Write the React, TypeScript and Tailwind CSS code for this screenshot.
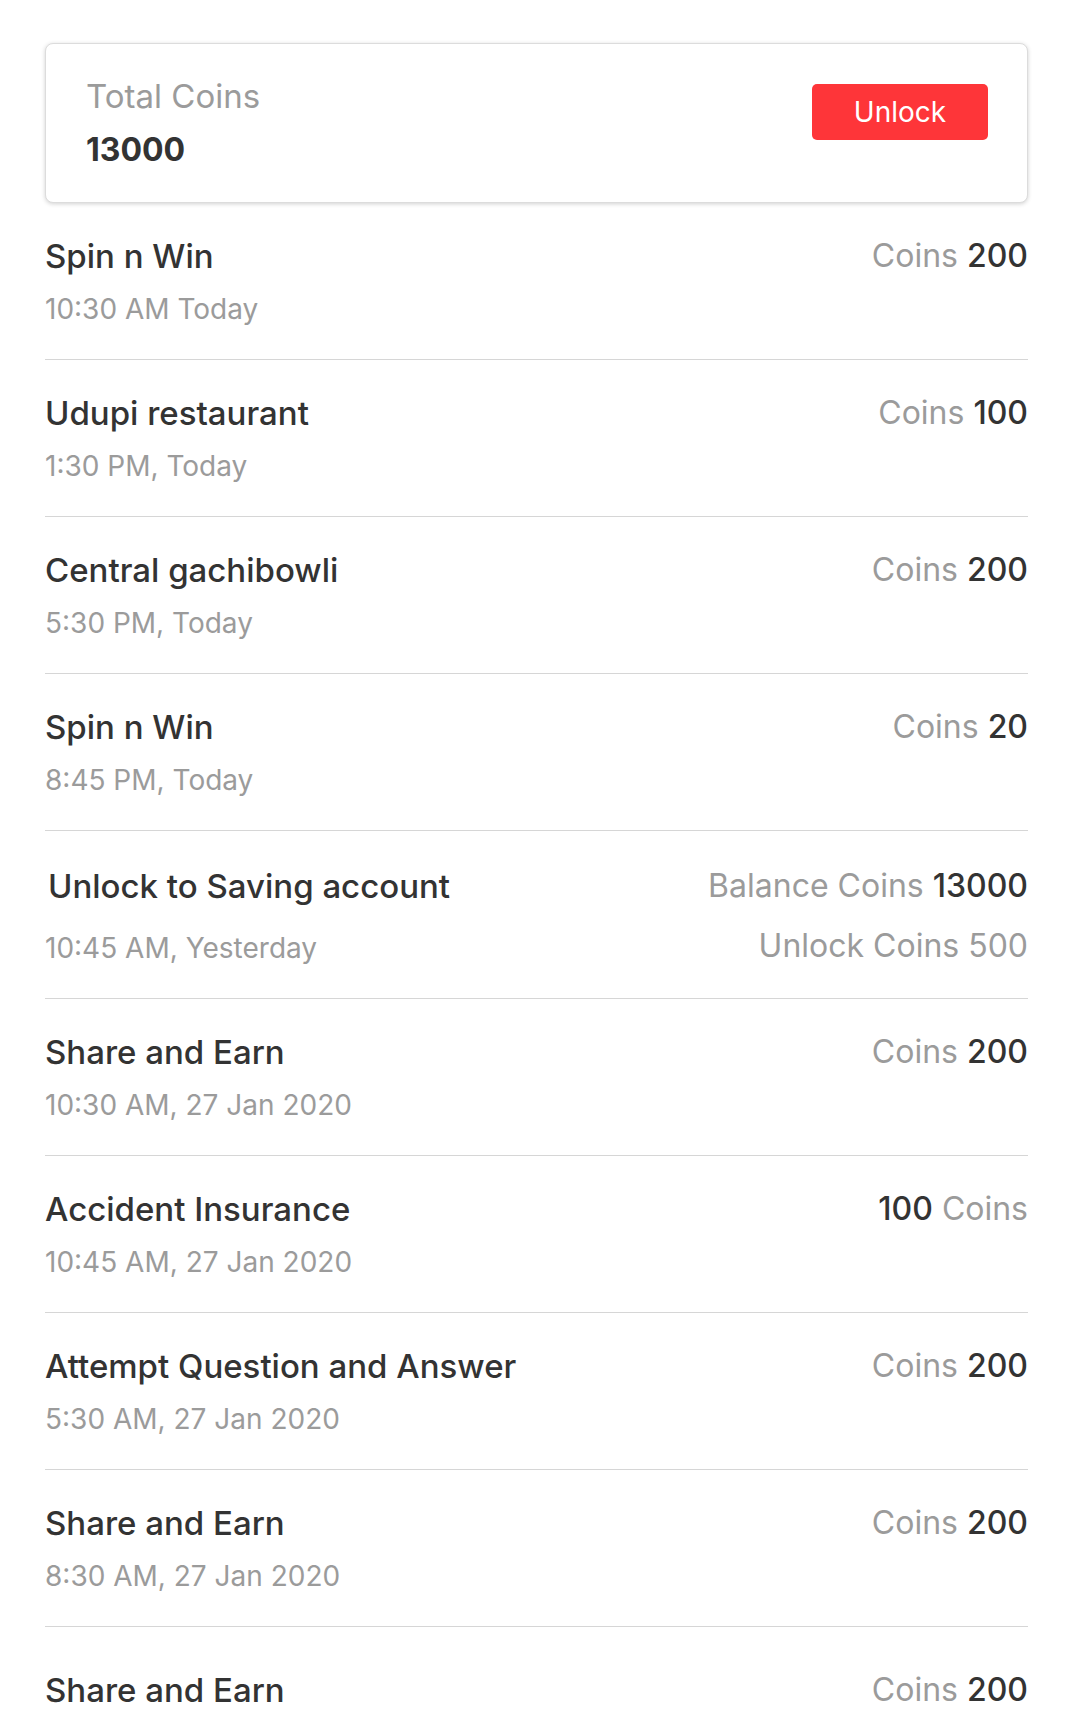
import React from "react";

type Entry = {
  title: string;
  time: string;
  amount: string;
  coinsFirst?: boolean;
};

const entries: Entry[] = [
  { title: "Spin n Win", time: "10:30 AM Today", amount: "200" },
  { title: "Udupi restaurant", time: "1:30 PM, Today", amount: "100" },
  { title: "Central gachibowli", time: "5:30 PM, Today", amount: "200" },
  { title: "Spin n Win", time: "8:45 PM, Today", amount: "20" },
];

const more: Entry[] = [
  { title: "Share and Earn", time: "10:30 AM, 27 Jan 2020", amount: "200" },
  { title: "Accident Insurance", time: "10:45 AM, 27 Jan 2020", amount: "100", coinsFirst: true },
  { title: "Attempt Question and Answer", time: "5:30 AM, 27 Jan 2020", amount: "200" },
  { title: "Share and Earn", time: "8:30 AM, 27 Jan 2020", amount: "200" },
];

function Row({ item, last }: { item: Entry; last?: boolean }) {
  return (
    <div
      className={
        last
          ? "flex justify-between items-start pt-[43px] pb-[32px] border-b border-[#d6d6d6]"
          : "flex justify-between items-start pt-[33px] pb-[32px] border-b border-[#d6d6d6]"
      }
    >
      <div className="flex flex-col">
        <div className="text-[33px] leading-[40px] font-medium text-[#333333]">{item.title}</div>
        <div className="mt-[15px] text-[28px] leading-[36px] text-[#9b9b9b]">{item.time}</div>
      </div>
      <div className="text-[32px] leading-[40px]">
        {item.coinsFirst ? (
          <>
            <span className="font-medium text-[#333333]">{item.amount}</span>{" "}
            <span className="text-[#9b9b9b]">Coins</span>
          </>
        ) : (
          <>
            <span className="text-[#9b9b9b]">Coins</span>{" "}
            <span className="font-medium text-[#333333]">{item.amount}</span>
          </>
        )}
      </div>
    </div>
  );
}

export default function App() {
  return (
    <div
      className="min-h-screen bg-white px-[45px] pt-[43px]"
      style={{ fontFamily: "Inter, 'Noto Sans', sans-serif" }}
    >
      {/* Total coins card */}
      <div className="flex justify-between items-start rounded-[8px] border border-[#dcdcdc] bg-white shadow-[0_1px_4px_rgba(0,0,0,0.18)] pl-[40px] pr-[39px] pt-[32px] pb-[32px]">
        <div className="flex flex-col">
          <div className="text-[33px] leading-[40px] text-[#9b9b9b]">Total Coins</div>
          <div className="mt-[14px] text-[32px] leading-[40px] font-bold text-[#333333]">13000</div>
        </div>
        <button className="mt-[8px] w-[176px] h-[56px] rounded-[5px] bg-[#fe3539] text-white text-[28px] leading-[36px]">
          Unlock
        </button>
      </div>

      {entries.map((e, i) => (
        <Row key={i} item={e} />
      ))}

      {/* Unlock to saving row */}
      <div className="flex justify-between items-start pt-[35px] pb-[32px] border-b border-[#d6d6d6]">
        <div className="flex flex-col">
          <div className="ml-[3px] text-[33px] leading-[40px] font-medium text-[#333333]">Unlock to Saving account</div>
          <div className="mt-[24px] text-[28px] leading-[36px] text-[#9b9b9b]">10:45 AM, Yesterday</div>
        </div>
        <div className="flex flex-col items-end">
          <div className="text-[32px] leading-[40px]">
            <span className="text-[#9b9b9b]">Balance Coins</span>{" "}
            <span className="font-medium text-[#333333]">13000</span>
          </div>
          <div className="mt-[20px] text-[32px] leading-[40px] text-[#9b9b9b]">Unlock Coins 500</div>
        </div>
      </div>

      {more.map((e, i) => (
        <Row key={i} item={e} />
      ))}
      <Row item={{ title: "Share and Earn", time: "9:30 AM, 27 Jan 2020", amount: "200" }} last />
    </div>
  );
}
